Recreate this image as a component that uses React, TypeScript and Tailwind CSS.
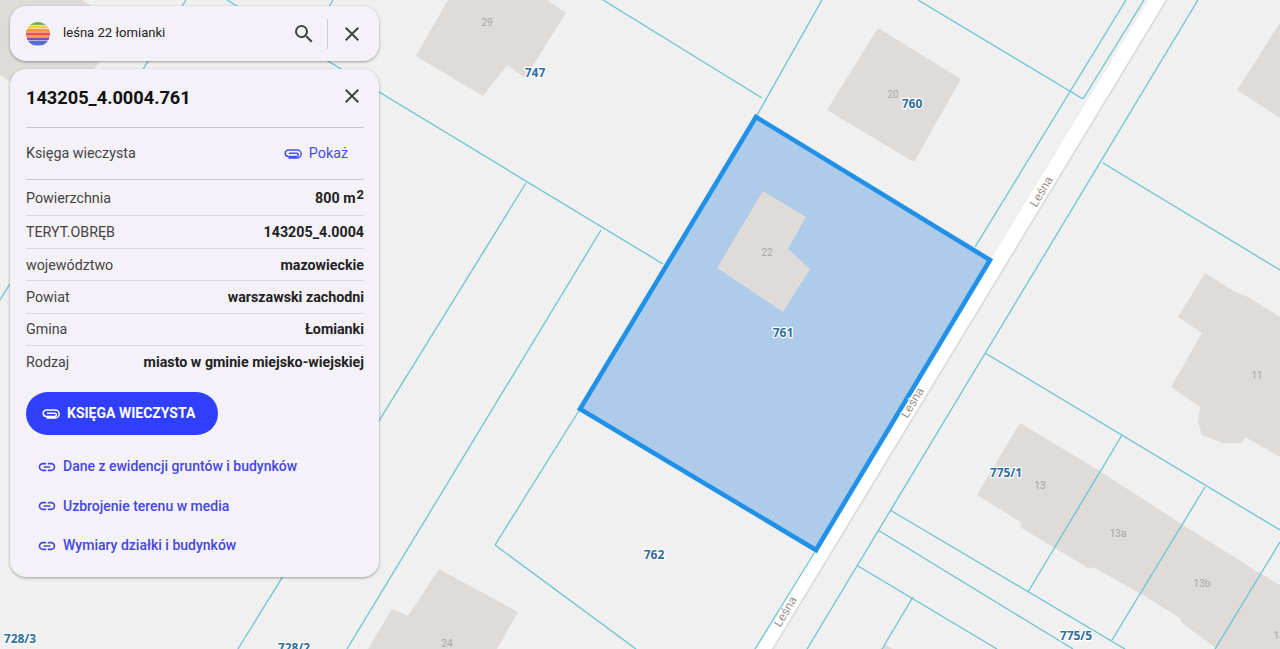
import React from "react";
import { MdSearch, MdClose, MdLink } from "react-icons/md";

const lines: [number, number, number, number][] = [
  [603, 0, 762, 98], [822, 0, 756, 117], [227, 0, 663, 264], [526, 183, 238, 649],
  [0, 300, 186, 0], [333, 0, 310, 37], [601, 230, 347, 649], [580, 409, 495, 545],
  [495, 545, 636, 649], [918, 0, 1083, 99], [1126, 0, 975, 247], [1144, 0, 1083, 99],
  [816, 550, 755, 649], [1198, 0, 807, 649], [1103, 163, 1280, 270], [985, 353, 1280, 530],
  [1122, 435, 1028, 592], [1205, 487, 1112, 640], [1280, 542, 1215, 649], [890, 510, 1125, 649],
  [878, 530, 1073, 649], [858, 566, 997, 649], [913, 597, 882, 649],
];

const buildings = [
  "0,0 82,0 125,28 60,114 0,75",
  "448,0 547,0 566,13 525,78 507,65 483,96 416,56",
  "878,28 961,79 914,162 827,110",
  "1280,23 1237,90 1280,118",
  "763,191 806,217 788,249 810,269 783,312 717,268",
  "1205,273 1235,292 1248,297 1280,317 1280,457 1245,437 1242,443 1223,443 1202,435 1198,423 1200,407 1171,387 1202,333 1178,317",
  "1020,423 1098,470 1180,523 1258,572 1280,585 1280,649 1217,649 1182,623 1180,618 1143,595 1093,567 1090,569 1055,548 1020,527 1022,523 977,495",
  "439,569 518,612 497,649 368,649 392,609 408,616",
  "880,649 886,645 893,649",
];

const parcelLabels: [string, number, number][] = [
  ["747", 535, 77], ["760", 912, 108], ["761", 783, 337], ["762", 654, 559],
  ["775/1", 1006, 477], ["775/5", 1076, 640], ["728/3", 20, 643], ["728/2", 294, 652],
];
const houseLabels: [string, number, number][] = [
  ["29", 487, 26], ["20", 893, 98], ["22", 767, 256], ["24", 447, 647], ["11", 1257, 379],
  ["13", 1040, 489], ["13a", 1118, 537], ["13b", 1202, 587], ["13", 1279, 639],
];
const streets: [number, number][] = [[1042, 192], [913, 403], [786, 612]];

function MapLayer() {
  return (
    <svg className="absolute inset-0" width="1280" height="649" viewBox="0 0 1280 649">
      {buildings.slice(0, 4).map((p) => <polygon key={p} points={p} fill="#dedbd9" />)}
      <line x1="1161" y1="-5" x2="761" y2="654" stroke="#dcdcdc" strokeWidth="17" />
      <line x1="1160" y1="-5" x2="760" y2="654" stroke="#ffffff" strokeWidth="15" />
      <polygon points="756,117 990,260 816,550 580,409" fill="#aecbe9" />
      {buildings.slice(4).map((p) => <polygon key={p} points={p} fill="#dedbd9" />)}
      {lines.map((l, i) => (
        <line key={i} x1={l[0]} y1={l[1]} x2={l[2]} y2={l[3]} stroke="#6cc3d3" strokeWidth="1.3" />
      ))}
      <polygon points="756,117 990,260 816,550 580,409" fill="none" stroke="#2191e8" strokeWidth="4.6" />
      {houseLabels.map(([t, x, y], i) => (
        <text key={i} x={x} y={y} textAnchor="middle" fontFamily="Roboto, sans-serif" fontSize="10" fill="#a9a6a4">{t}</text>
      ))}
      {parcelLabels.map(([t, x, y]) => (
        <text key={t} x={x} y={y} textAnchor="middle" fontFamily="'Noto Sans', sans-serif" fontWeight="700" fontSize="12" fill="#2f6f9e" stroke="#ffffff" strokeWidth="2.5" strokeLinejoin="round" paintOrder="stroke">{t}</text>
      ))}
      {streets.map(([x, y]) => (
        <text key={x} transform={`translate(${x} ${y}) rotate(-59)`} textAnchor="middle" dominantBaseline="middle" fontFamily="'Liberation Sans', sans-serif" fontSize="12" fill="#9c9088" stroke="#ffffff" strokeWidth="1.5" paintOrder="stroke">Leśna</text>
      ))}
    </svg>
  );
}

function Logo() {
  const stripes = [
    ["#6ab04c", 21, 3.5], ["#f6cf3c", 24.5, 3.5], ["#f59a2f", 28, 3.5], ["#e9503f", 31.5, 3.5],
    ["#f08a3c", 34.5, 2], ["#8e44ad", 36.5, 3.5], ["#4f6fd8", 40, 5],
  ] as const;
  return (
    <svg width="24" height="24" viewBox="26 21 24 24" className="shrink-0">
      <defs>
        <clipPath id="logoClip"><circle cx="38" cy="33" r="12" /></clipPath>
      </defs>
      <g clipPath="url(#logoClip)">
        <rect x="26" y="21" width="24" height="24" fill="#f5f1f8" />
        {stripes.map(([c, y, h]) => <rect key={c} x="26" y={y} width="24" height={h - 0.6} fill={c} />)}
      </g>
    </svg>
  );
}

function Clip() {
  return (
    <svg width="18" height="10" viewBox="0 0 18 10" fill="none" stroke="currentColor" strokeWidth="1.5" strokeLinecap="round" className="shrink-0">
      <path d="M5 9h8.2a3.9 3.9 0 0 0 0-8H4.4a3.2 3.2 0 0 0 0 6.4h8.4a1.6 1.6 0 0 0 0-3.2H5.4" />
    </svg>
  );
}

const rows: [string, React.ReactNode, string][] = [
  ["Powierzchnia", <>800 m<sup className="top-[-4px] ml-px align-baseline text-[13px] leading-none">2</sup></>, "h-[36px] pt-[3px]"],
  ["TERYT.OBRĘB", "143205_4.0004", "h-[33px] pt-[2px]"],
  ["województwo", "mazowieckie", "h-[32px] pt-[2px]"],
  ["Powiat", "warszawski zachodni", "h-[33px] pt-[2px]"],
  ["Gmina", "Łomianki", "h-[32px]"],
  ["Rodzaj", "miasto w gminie miejsko-wiejskiej", "h-[33px]"],
];

const links = ["Dane z ewidencji gruntów i budynków", "Uzbrojenie terenu w media", "Wymiary działki i budynków"];

export default function App() {
  return (
    <div className="relative h-[649px] w-full overflow-hidden bg-[#f0f0f0] font-['Roboto',sans-serif]">
      <MapLayer />
      <div className="absolute left-[10px] top-[6px] flex w-[369px] flex-col gap-[8px]">
        <div className="flex h-[55px] items-center rounded-2xl bg-[#f5f1f8] pl-[16px] pr-[15px] shadow-[0_1px_3px_rgba(0,0,0,0.35)]">
          <Logo />
          <span className="mb-[2px] ml-[13px] flex-1 text-[13.1px] text-[#222]">leśna 22 łomianki</span>
          <MdSearch size={24} className="text-[#444]" />
          <div className="ml-[11px] mr-[12px] h-[30px] w-px bg-[#cfcbd2]" />
          <MdClose size={24} className="text-[#444]" />
        </div>
        <div className="flex h-[508px] flex-col rounded-2xl bg-[#f5f1f8] pl-[16px] pr-[15px] shadow-[0_1px_3px_rgba(0,0,0,0.35)]">
          <div className="flex h-[59px] shrink-0 items-center justify-between border-b border-[#c9c5cc]">
            <span className="text-[18.2px] font-bold text-[#111]">143205_4.0004.761</span>
            <MdClose size={24} className="mb-[4px] text-[#444]" />
          </div>
          <div className="flex h-[52px] shrink-0 items-center justify-between border-b border-[#c9c5cc] pr-[16px]">
            <span className="text-[14.3px] text-[#444]">Księga wieczysta</span>
            <span className="flex items-center gap-[7px] text-[14.3px] text-[#4450ea]">
              <Clip />
              Pokaż
            </span>
          </div>
          {rows.map(([k, v, h], i) => (
            <div key={k} className={`flex shrink-0 items-center justify-between text-[14.25px] ${h} ${i < rows.length - 1 ? "border-b border-[#dcd8df]" : ""}`}>
              <span className="text-[#444]">{k}</span>
              <span className="font-bold text-[#222]">{v}</span>
            </div>
          ))}
          <button className="mt-[13px] flex h-[43px] w-[192px] shrink-0 items-center rounded-full bg-[#2f3ffb] pl-[16px] text-[14px] font-bold text-white">
            <Clip />
            <span className="ml-[7px]">KSIĘGA WIECZYSTA</span>
          </button>
          <div className="mt-[12px] flex flex-col">
            {links.map((l) => (
              <div key={l} className="flex h-[39.5px] items-center pl-[11px] text-[14px] font-medium text-[#4448e0]">
                <MdLink size={20} />
                <span className="ml-[6px]">{l}</span>
              </div>
            ))}
          </div>
        </div>
      </div>
    </div>
  );
}
